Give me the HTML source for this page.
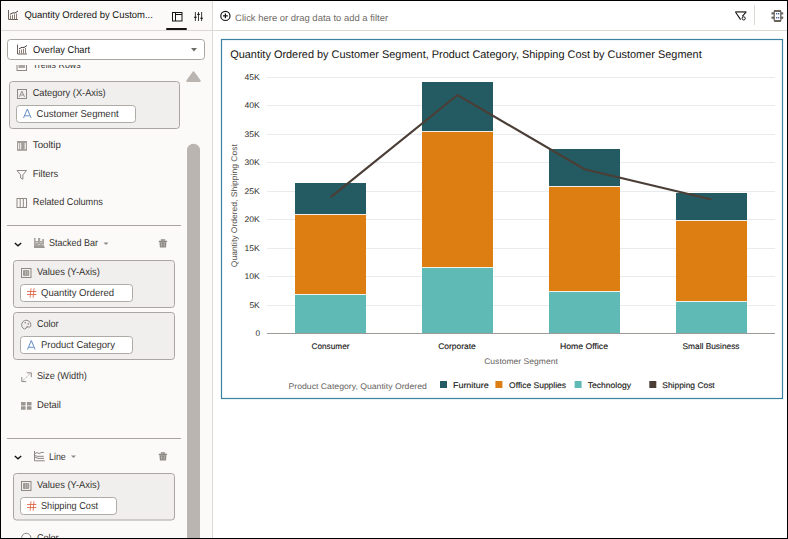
<!DOCTYPE html>
<html><head><meta charset="utf-8"><title>Overlay Chart</title>
<style>
html,body{margin:0;padding:0;width:788px;height:539px;overflow:hidden;background:#fff}
svg{display:block;font-family:"Liberation Sans", sans-serif;text-rendering:geometricPrecision}
</style></head><body>
<svg width="788" height="539" viewBox="0 0 788 539">
<rect x="0" y="0" width="788" height="539" fill="#000"/>
<rect x="1" y="1" width="786" height="537" fill="#ffffff"/>
<rect x="1" y="1" width="211" height="537" fill="#fbfaf8"/>
<rect x="212" y="1" width="1" height="537" fill="#dcd9d5"/>
<rect x="1" y="30" width="786" height="1" fill="#dcd9d5"/>
<g stroke="#6b625c" stroke-width="1" fill="none"><path d="M8.5 10v9.5h9.5"/><path d="M10.5 19v-3.5M12.5 19v-4M14.5 19v-4.7M16.5 19v-5.5" stroke="#8a7a70"/><path d="M10 14.3l3-1.5 2 0.2 3-2" stroke="#4a4040"/></g>
<text x="24.4" y="18.3" font-size="9.8" fill="#161513" textLength="128.5" lengthAdjust="spacingAndGlyphs">Quantity Ordered by Custom...</text>
<g stroke="#161513" stroke-width="1" fill="none"><rect x="172.5" y="12.5" width="9.5" height="8.5"/><path d="M175.5 12.5v8.5M175.5 14.5h6.5"/></g>
<g stroke="#2a2826" stroke-width="0.9" fill="none"><path d="M195.4 12v9M198.5 12v9M201.6 12v9"/></g><g fill="#161513"><path d="M193.8 16.8h3.2l-0.8 1.2h-1.6z"/><path d="M196.9 15h3.2l-0.8-1.2h-1.6z"/><path d="M200 17.8h3.2l-0.8 1.2h-1.6z"/></g>
<rect x="166" y="28" width="21" height="2" fill="#161513" rx="1"/>
<g stroke="#161513" stroke-width="1" fill="none"><circle cx="225.4" cy="15.9" r="4.6" stroke-width="1.2"/><path d="M225.4 13.5v4.8M223 15.9h4.8" stroke-width="1.2"/></g>
<text x="235.1" y="21" font-size="9.3" fill="#6f6a66" textLength="153" lengthAdjust="spacingAndGlyphs">Click here or drag data to add a filter</text>
<g fill="none"><path d="M735.2 11.9H746.4" stroke="#5a5550" stroke-width="1.6"/><path d="M735.6 12.2L740.6 19.6M746 12.2L742.3 16.3" stroke="#161513" stroke-width="1.1"/><circle cx="743.7" cy="18.4" r="1.6" stroke="#161513" stroke-width="1"/></g>
<rect x="754" y="5" width="1" height="20" fill="#dcd9d5"/>
<rect x="774.2" y="10.6" width="6.6" height="10.8" rx="1.2" fill="#fff" stroke="#5a5550" stroke-width="1.2"/><g fill="#6b6560"><rect x="774" y="10" width="7" height="2"/><rect x="774" y="20" width="7" height="1.8"/><rect x="771.5" y="12.3" width="2.5" height="2.2"/><rect x="771.5" y="16.6" width="2.5" height="2.2"/><rect x="781" y="12.3" width="2.2" height="2.2"/><rect x="781" y="16.6" width="2.2" height="2.2"/></g><g fill="#2f4d8c"><circle cx="776.7" cy="13.8" r="0.75"/><circle cx="778.6" cy="13.8" r="0.75"/><circle cx="776.7" cy="17.8" r="0.75"/><circle cx="778.6" cy="17.8" r="0.75"/></g>
<defs><clipPath id="lp"><rect x="1" y="65" width="211" height="479"/></clipPath></defs>
<g clip-path="url(#lp)">
<rect x="17" y="61.5" width="9.5" height="9" fill="none" stroke="#8d8984"/><rect x="18.5" y="63" width="6.5" height="5" fill="#a9a5a0"/>
<text x="32.7" y="68.4" font-size="9.9" fill="#35322f" textLength="48" lengthAdjust="spacingAndGlyphs">Trellis Rows</text>
</g>
<rect x="7.5" y="39.5" width="197" height="20" fill="#ffffff" stroke="#aaa6a1" stroke-width="1" rx="3"/>
<g stroke="#6b625c" stroke-width="1" fill="none"><path d="M17.5 44.5v9.5h9.5"/><path d="M19.5 53.5v-3.5M21.5 53.5v-4M23.5 53.5v-4.7M25.5 53.5v-5.5" stroke="#8a7a70"/><path d="M19 48.8l3-1.5 2 0.2 3-2" stroke="#4a4040"/></g>
<text x="33" y="53.4" font-size="9.9" fill="#161513" textLength="57.2" lengthAdjust="spacingAndGlyphs">Overlay Chart</text>
<path d="M191 48h6l-3 3.5z" fill="#6f6b67"/>
<path d="M187.3 80.9h12.4l-6.2-8.6z" fill="#bab5b0" stroke="#bab5b0" stroke-width="2" stroke-linejoin="round"/>
<path d="M187 150.2a6.5 6.5 0 0 1 13 0V539H187z" fill="#bab5b0"/>
<rect x="9.5" y="81.5" width="170" height="47" fill="#f0efed" stroke="#aaa5a0" stroke-width="1" rx="3"/>
<g stroke="#8d8984" fill="none"><rect x="17.5" y="89.5" width="9" height="9"/></g><path d="M19.3 96.8l2.6-5.6 2.6 5.6M20.3 95h3.2" stroke="#8d8984" fill="none" stroke-width="0.9"/>
<text x="32.7" y="96.3" font-size="9.9" fill="#35322f" textLength="73" lengthAdjust="spacingAndGlyphs">Category (X-Axis)</text>
<rect x="16.5" y="105.5" width="119" height="17" fill="#ffffff" stroke="#aeaaa5" stroke-width="1" rx="3"/>
<path d="M23.5 118l3.8-9 3.8 9M25 115.8h4.6" stroke="#5080c0" fill="none" stroke-width="0.9"/>
<text x="36.6" y="117.2" font-size="9.9" fill="#35322f" textLength="82" lengthAdjust="spacingAndGlyphs">Customer Segment</text>
<rect x="17" y="141" width="10" height="9.8" fill="#a19d98"/><g fill="#eeecea"><rect x="18" y="143" width="1.2" height="6.2"/><rect x="20" y="143" width="1.2" height="6.2"/><rect x="24.6" y="143" width="1.3" height="6.2"/></g>
<text x="32.8" y="148" font-size="9.9" fill="#35322f" textLength="28" lengthAdjust="spacingAndGlyphs">Tooltip</text>
<path d="M17 170.5h9.5l-3.6 4.4v4.3l-2.3-1.2v-3.1z" stroke="#8d8984" fill="none" stroke-linejoin="round"/>
<text x="32.8" y="177.2" font-size="9.9" fill="#35322f" textLength="25.5" lengthAdjust="spacingAndGlyphs">Filters</text>
<g stroke="#8d8984" fill="none"><rect x="17" y="198.5" width="9.5" height="9"/><path d="M20.2 199v8M23.3 199v8"/></g>
<text x="32.8" y="204.9" font-size="9.9" fill="#35322f" textLength="70" lengthAdjust="spacingAndGlyphs">Related Columns</text>
<rect x="7" y="225" width="174" height="1" fill="#a9a4a0"/>
<path d="M14.8 243l3.2 2.8 3.2-2.8" stroke="#161513" fill="none" stroke-width="1.4"/>
<path d="M34 238h1.6v3h2.4v-3h2.2v3h2v-2h1.8v8.8H34z" fill="#a9a5a0"/><rect x="34" y="246.6" width="10.8" height="1.1" fill="#8d8984"/><g fill="#d9d6d2"><rect x="35.6" y="242.3" width="2.4" height="0.8"/><rect x="40.2" y="242.3" width="2" height="0.8"/><rect x="38" y="244.3" width="2.2" height="0.8"/><rect x="42.2" y="244.3" width="1.8" height="0.8"/></g>
<text x="49" y="246.4" font-size="9.9" fill="#35322f" textLength="49" lengthAdjust="spacingAndGlyphs">Stacked Bar</text>
<path d="M103.5 242.5h5l-2.5 2.5z" fill="#8d8984"/>
<g fill="#8d8984"><rect x="158.8" y="240.7" width="8.3" height="1.5"/><rect x="160.7" y="239.2" width="4.5" height="1.5" rx="0.6"/><path d="M159.5 242.2h6.9l-0.4 5.3h-6.1z"/></g><g fill="#c9c5c1"><rect x="161.3" y="243.3" width="0.8" height="3.2"/><rect x="163.8" y="243.3" width="0.8" height="3.2"/></g>
<rect x="13.5" y="260.5" width="161" height="47" fill="#f0efed" stroke="#aaa5a0" stroke-width="1" rx="3"/>
<g stroke="#8d8984" fill="none"><rect x="21.5" y="268.5" width="9.5" height="9"/></g><rect x="23" y="270" width="6.2" height="6" rx="1" fill="#9d9994"/><g fill="#c9c5c1"><rect x="25.2" y="270.5" width="0.6" height="5"/><rect x="27.3" y="270.5" width="0.6" height="5"/></g>
<text x="36.9" y="275.3" font-size="9.9" fill="#35322f" textLength="63" lengthAdjust="spacingAndGlyphs">Values (Y-Axis)</text>
<rect x="20.5" y="284.5" width="112" height="17" fill="#ffffff" stroke="#aeaaa5" stroke-width="1" rx="3"/>
<path d="M31 288.3l-0.9 9.4M34 288.3l-0.9 9.4M27 291.5h9.4M27 294.5h9.4" stroke="#df6a4c" fill="none" stroke-width="0.9"/>
<text x="41" y="296.3" font-size="9.9" fill="#35322f" textLength="73" lengthAdjust="spacingAndGlyphs">Quantity Ordered</text>
<rect x="13.5" y="312.5" width="161" height="47" fill="#f0efed" stroke="#aaa5a0" stroke-width="1" rx="3"/>
<g stroke="#8d8984" fill="none"><path d="M24.5 329.1a4.6 4.6 0 1 1 6.1-2.7c-0.3 0.9-1.3 0.8-2.2 0.5-1.5-0.5-2.3 0.3-2.2 1.2z"/></g><g fill="#8d8984"><circle cx="25.2" cy="322.8" r="0.8"/><circle cx="28.3" cy="323.9" r="0.8"/><circle cx="27.1" cy="327" r="0.8"/></g>
<text x="36.9" y="327.2" font-size="9.9" fill="#35322f" textLength="21.7" lengthAdjust="spacingAndGlyphs">Color</text>
<rect x="20.5" y="336.5" width="112" height="17" fill="#ffffff" stroke="#aeaaa5" stroke-width="1" rx="3"/>
<path d="M27.5 349.5l3.8-9 3.8 9M29 347.3h4.6" stroke="#5080c0" fill="none" stroke-width="0.9"/>
<text x="41" y="348.3" font-size="9.9" fill="#35322f" textLength="74" lengthAdjust="spacingAndGlyphs">Product Category</text>
<g stroke="#8d8984" fill="none"><path d="M21.8 377v4.6h4.4M26.8 372.8h4.5v4.4"/><path d="M22.8 380.6L30.2 373.8" stroke-dasharray="1.2 1" stroke-width="0.8"/></g>
<text x="36.9" y="379.3" font-size="9.9" fill="#35322f" textLength="50" lengthAdjust="spacingAndGlyphs">Size (Width)</text>
<g fill="#9a9691"><rect x="21" y="402" width="4.6" height="3.4" rx="0.5"/><rect x="26.9" y="402" width="4.6" height="3.4" rx="0.5"/><rect x="21" y="406.2" width="4.6" height="3.6" rx="0.5"/><rect x="26.9" y="406.2" width="4.6" height="3.6" rx="0.5"/></g>
<text x="36.9" y="408.2" font-size="9.9" fill="#35322f" textLength="24" lengthAdjust="spacingAndGlyphs">Detail</text>
<rect x="7" y="438" width="174" height="1" fill="#a9a4a0"/>
<path d="M14.8 456l3.2 2.8 3.2-2.8" stroke="#161513" fill="none" stroke-width="1.4"/>
<g stroke="#8d8984" fill="none" stroke-width="1"><path d="M34.5 451v9.8h10.3"/><path d="M35 453.5l2 -1 2 1 3-1.2 1.8 0.2M35 455.5l2 0.8h6.8M35 457.2l3 1.2h6"/></g>
<text x="49" y="459.5" font-size="9.9" fill="#35322f" textLength="16.8" lengthAdjust="spacingAndGlyphs">Line</text>
<path d="M71 455.5h5l-2.5 2.5z" fill="#8d8984"/>
<g fill="#8d8984"><rect x="158.8" y="453.7" width="8.3" height="1.5"/><rect x="160.7" y="452.2" width="4.5" height="1.5" rx="0.6"/><path d="M159.5 455.2h6.9l-0.4 5.3h-6.1z"/></g><g fill="#c9c5c1"><rect x="161.3" y="456.3" width="0.8" height="3.2"/><rect x="163.8" y="456.3" width="0.8" height="3.2"/></g>
<rect x="13.5" y="473.5" width="161" height="46.5" fill="#f0efed" stroke="#aaa5a0" stroke-width="1" rx="3"/>
<g stroke="#8d8984" fill="none"><rect x="21.5" y="481.5" width="9.5" height="9"/></g><rect x="23" y="483" width="6.2" height="6" rx="1" fill="#9d9994"/><g fill="#c9c5c1"><rect x="25.2" y="483.5" width="0.6" height="5"/><rect x="27.3" y="483.5" width="0.6" height="5"/></g>
<text x="36.9" y="488.2" font-size="9.9" fill="#35322f" textLength="63" lengthAdjust="spacingAndGlyphs">Values (Y-Axis)</text>
<rect x="20.5" y="497.5" width="96" height="17" fill="#ffffff" stroke="#aeaaa5" stroke-width="1" rx="3"/>
<path d="M31 501.3l-0.9 9.4M34 501.3l-0.9 9.4M27 504.5h9.4M27 507.5h9.4" stroke="#df6a4c" fill="none" stroke-width="0.9"/>
<text x="41" y="509.3" font-size="9.9" fill="#35322f" textLength="57" lengthAdjust="spacingAndGlyphs">Shipping Cost</text>
<g stroke="#8d8984" fill="none"><path d="M24.5 542.1a4.6 4.6 0 1 1 6.1-2.7c-0.3 0.9-1.3 0.8-2.2 0.5-1.5-0.5-2.3 0.3-2.2 1.2z"/></g>
<text x="36.9" y="540.5" font-size="9.9" fill="#35322f" textLength="21.7" lengthAdjust="spacingAndGlyphs">Color</text>
<rect x="0" y="538" width="788" height="1" fill="#000"/>
<rect x="221.5" y="39.5" width="561" height="359" fill="#ffffff" stroke="#3a82a0" stroke-width="1.2"/>
<text x="230.2" y="57.9" font-size="11" fill="#161513" textLength="471.5" lengthAdjust="spacingAndGlyphs">Quantity Ordered by Customer Segment, Product Category, Shipping Cost by Customer Segment</text>
<rect x="267" y="305" width="508" height="1" fill="#e9ebee"/>
<text x="259.8" y="307.7" font-size="8.2" fill="#2e2c2a" textLength="10.4" lengthAdjust="spacingAndGlyphs" text-anchor="end">5K</text>
<rect x="267" y="276" width="508" height="1" fill="#e9ebee"/>
<text x="259.8" y="278.7" font-size="8.2" fill="#2e2c2a" textLength="15.3" lengthAdjust="spacingAndGlyphs" text-anchor="end">10K</text>
<rect x="267" y="248" width="508" height="1" fill="#e9ebee"/>
<text x="259.8" y="250.7" font-size="8.2" fill="#2e2c2a" textLength="15.3" lengthAdjust="spacingAndGlyphs" text-anchor="end">15K</text>
<rect x="267" y="219" width="508" height="1" fill="#e9ebee"/>
<text x="259.8" y="221.7" font-size="8.2" fill="#2e2c2a" textLength="15.3" lengthAdjust="spacingAndGlyphs" text-anchor="end">20K</text>
<rect x="267" y="191" width="508" height="1" fill="#e9ebee"/>
<text x="259.8" y="193.7" font-size="8.2" fill="#2e2c2a" textLength="15.3" lengthAdjust="spacingAndGlyphs" text-anchor="end">25K</text>
<rect x="267" y="162" width="508" height="1" fill="#e9ebee"/>
<text x="259.8" y="164.7" font-size="8.2" fill="#2e2c2a" textLength="15.3" lengthAdjust="spacingAndGlyphs" text-anchor="end">30K</text>
<rect x="267" y="134" width="508" height="1" fill="#e9ebee"/>
<text x="259.8" y="136.7" font-size="8.2" fill="#2e2c2a" textLength="15.3" lengthAdjust="spacingAndGlyphs" text-anchor="end">35K</text>
<rect x="267" y="105" width="508" height="1" fill="#e9ebee"/>
<text x="259.8" y="107.7" font-size="8.2" fill="#2e2c2a" textLength="15.3" lengthAdjust="spacingAndGlyphs" text-anchor="end">40K</text>
<rect x="267" y="77" width="508" height="1" fill="#e9ebee"/>
<text x="259.8" y="79.7" font-size="8.2" fill="#2e2c2a" textLength="15.3" lengthAdjust="spacingAndGlyphs" text-anchor="end">45K</text>
<text x="260" y="335.9" font-size="8.2" fill="#2e2c2a" text-anchor="end">0</text>
<rect x="295" y="183" width="71" height="31" fill="#245b62"/>
<rect x="295" y="214" width="71" height="1" fill="#f3ede6"/>
<rect x="295" y="215" width="71" height="79" fill="#dd7e12"/>
<rect x="295" y="294" width="71" height="1" fill="#eef3ef"/>
<rect x="295" y="295" width="71" height="38" fill="#5fb9b4"/>
<rect x="422" y="82" width="71" height="49" fill="#245b62"/>
<rect x="422" y="131" width="71" height="1" fill="#f3ede6"/>
<rect x="422" y="132" width="71" height="135" fill="#dd7e12"/>
<rect x="422" y="267" width="71" height="1" fill="#eef3ef"/>
<rect x="422" y="268" width="71" height="65" fill="#5fb9b4"/>
<rect x="549" y="149" width="71" height="37" fill="#245b62"/>
<rect x="549" y="186" width="71" height="1" fill="#f3ede6"/>
<rect x="549" y="187" width="71" height="104" fill="#dd7e12"/>
<rect x="549" y="291" width="71" height="1" fill="#eef3ef"/>
<rect x="549" y="292" width="71" height="41" fill="#5fb9b4"/>
<rect x="676" y="193" width="71" height="27" fill="#245b62"/>
<rect x="676" y="220" width="71" height="1" fill="#f3ede6"/>
<rect x="676" y="221" width="71" height="80" fill="#dd7e12"/>
<rect x="676" y="301" width="71" height="1" fill="#eef3ef"/>
<rect x="676" y="302" width="71" height="31" fill="#5fb9b4"/>
<rect x="267" y="333" width="508" height="1" fill="#9e9a96"/>
<polyline points="330.5,197.3 457.5,95 584.5,169.2 711.5,199.5" fill="none" stroke="#4a3e36" stroke-width="2.2" stroke-linejoin="miter"/>
<text transform="translate(237.3 205.7) rotate(-90)" text-anchor="middle" font-size="8.2" fill="#55514d" textLength="123" lengthAdjust="spacingAndGlyphs">Quantity Ordered, Shipping Cost</text>
<text x="330.5" y="349.2" font-size="8.2" fill="#161513" textLength="38" lengthAdjust="spacingAndGlyphs" text-anchor="middle" stroke="#161513" stroke-width="0.12">Consumer</text>
<text x="457" y="349.2" font-size="8.2" fill="#161513" textLength="37.7" lengthAdjust="spacingAndGlyphs" text-anchor="middle" stroke="#161513" stroke-width="0.12">Corporate</text>
<text x="584" y="349.2" font-size="8.2" fill="#161513" textLength="48" lengthAdjust="spacingAndGlyphs" text-anchor="middle" stroke="#161513" stroke-width="0.12">Home Office</text>
<text x="711" y="349.2" font-size="8.2" fill="#161513" textLength="57" lengthAdjust="spacingAndGlyphs" text-anchor="middle" stroke="#161513" stroke-width="0.12">Small Business</text>
<text x="521" y="363.7" font-size="8.2" fill="#66625e" textLength="73.6" lengthAdjust="spacingAndGlyphs" text-anchor="middle">Customer Segment</text>
<text x="288.5" y="388.8" font-size="8.2" fill="#66625e" textLength="138.3" lengthAdjust="spacingAndGlyphs">Product Category, Quantity Ordered</text>
<rect x="440" y="381" width="7" height="7" fill="#245b62"/>
<text x="453" y="387.9" font-size="8.2" fill="#161513" textLength="35.6" lengthAdjust="spacingAndGlyphs" stroke="#161513" stroke-width="0.12">Furniture</text>
<rect x="495.4" y="381" width="7" height="7" fill="#dd7e12"/>
<text x="509.1" y="387.9" font-size="8.2" fill="#161513" textLength="57" lengthAdjust="spacingAndGlyphs" stroke="#161513" stroke-width="0.12">Office Supplies</text>
<rect x="574.6" y="381" width="7" height="7" fill="#5fb9b4"/>
<text x="587.7" y="387.9" font-size="8.2" fill="#161513" textLength="43.3" lengthAdjust="spacingAndGlyphs" stroke="#161513" stroke-width="0.12">Technology</text>
<rect x="649.3" y="381" width="7" height="7" fill="#4a3e36"/>
<text x="662.3" y="387.9" font-size="8.2" fill="#161513" textLength="52.4" lengthAdjust="spacingAndGlyphs" stroke="#161513" stroke-width="0.12">Shipping Cost</text>
</svg>
</body></html>
